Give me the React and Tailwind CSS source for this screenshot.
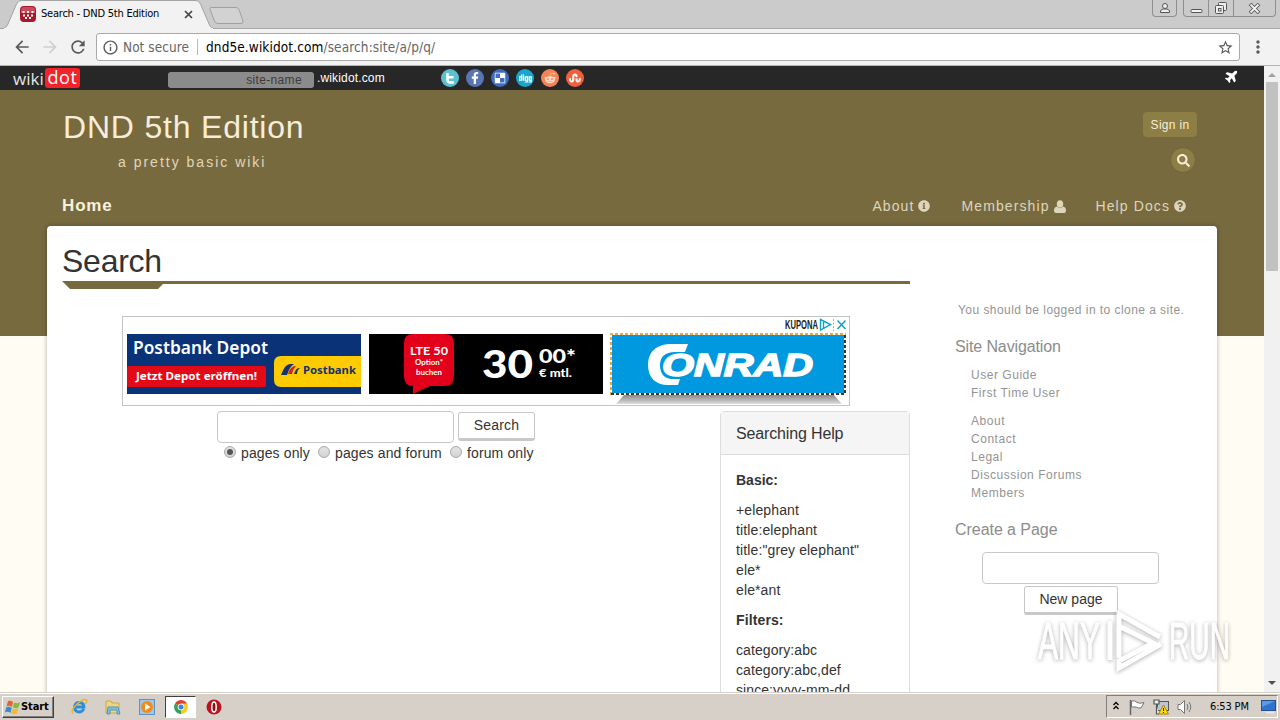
import {
  FaFacebookF,
  FaDelicious,
  FaDigg,
  FaRedditAlien,
  FaStumbleupon,
  FaInfoCircle,
  FaQuestionCircle,
  FaSearch,
  FaPlane,
} from 'react-icons/fa';
import { MdArrowBack, MdArrowForward, MdRefresh, MdInfoOutline, MdStarBorder, MdMoreVert } from 'react-icons/md';

const TabStrip = () => (
  <div className="relative flex h-[29px] shrink-0 bg-[#cbcbcb] border-b border-[#a8a8a8]">
    <svg className="absolute left-0 top-0" width="250" height="29">
      <path d="M0 29 V28.5 H3 Q6 28 7.500 25 L16.500 4 Q18 .5 21 .5 H196 Q199 .5 200.500 4 L209.500 25 Q211 28.500 214 28.500 V29 Z" fill="#f2f2f2" stroke="#a3a3a3" />
      <path d="M4 29 H213" stroke="#f2f2f2" strokeWidth="2" />
      <path d="M211 7.500 H236 Q238 7.500 239 9.500 L243 21 Q243.500 23.500 241 23.500 H218 Q215.500 23.500 214.500 21 L210 9.500 Q209.500 7.500 211 7.500 Z" fill="#d2d2d2" stroke="#a0a0a0" />
    </svg>
    <div className="relative flex h-7 w-[200px] items-center pl-5">
      <svg width="16" height="16" viewBox="0 0 16 16">
        <rect width="16" height="16" rx="4" fill="#a8182a" />
        <path d="M1 4 Q1 1 4 1 H12 Q15 1 15 4 V7 H1 Z" fill="#c94a58" />
        <g fill="#fff">
          <rect x="2.500" y="5" width="2" height="2" />
          <rect x="7" y="5" width="2" height="2" />
          <rect x="11.500" y="5" width="2" height="2" />
          <rect x="3" y="8.500" width="2" height="2" />
          <rect x="7" y="8.500" width="2" height="2" />
          <rect x="11" y="8.500" width="2" height="2" />
          <rect x="5" y="11" width="2" height="2" />
          <rect x="9" y="11" width="2" height="2" />
        </g>
      </svg>
      <span className="ml-[5px] mt-px whitespace-nowrap text-[11px] tracking-[-0.220px] text-black">Search - DND 5th Edition</span>
      <svg className="ml-auto mr-[7px]" width="9" height="9" viewBox="0 0 9 9">
        <path d="M1 1 L8 8 M8 1 L1 8" stroke="#444" strokeWidth="1.700" />
      </svg>
    </div>
    <div className="ml-auto flex h-[17px]">
      <div className="flex w-[25px] items-center justify-center rounded-b border border-t-0 border-[#8f8f8f]">
        <svg width="12" height="12" viewBox="0 0 12 12" fill="#eee" stroke="#555">
          <path d="M1.500 10.500 V8.500 L4 7 H8 L10.500 8.500 V10.500 Z" />
          <circle cx="6" cy="4" r="2.500" />
        </svg>
      </div>
      <div className="ml-[6px] mr-1 flex w-[93px] rounded-b border border-t-0 border-[#8f8f8f]">
        <div className="flex w-[25px] items-center justify-center border-r border-[#8f8f8f]">
          <svg width="13" height="15" viewBox="0 0 13 15">
            <rect x="1" y="8.500" width="11" height="3" rx="1" fill="#f4f4f4" stroke="#555" />
          </svg>
        </div>
        <div className="flex w-[25px] items-center justify-center border-r border-[#8f8f8f]">
          <svg width="14" height="14" viewBox="0 0 14 14" fill="#eee" stroke="#555">
            <rect x="4.500" y="1.500" width="8" height="8" rx="1" />
            <rect x="1.500" y="4.500" width="8" height="8" rx="1" />
            <rect x="4.500" y="7.500" width="2.500" height="2.500" />
          </svg>
        </div>
        <div className="flex flex-1 items-center justify-center">
          <svg width="13" height="11" viewBox="0 0 13 11">
            <path d="M2 1 L11 10 M11 1 L2 10" stroke="#555" strokeWidth="3.600" />
            <path d="M2.500 1.500 L10.500 9.500 M10.500 1.500 L2.500 9.500" stroke="#f2f2f2" strokeWidth="1.800" />
          </svg>
        </div>
      </div>
    </div>
  </div>
);

const Toolbar = () => (
  <div className="flex h-[37px] shrink-0 items-center border-b border-[#b4b4b4] bg-[#f2f2f2] text-[#5a5a5a]">
    <MdArrowBack size={20} className="ml-3" />
    <MdArrowForward size={20} className="ml-2 text-[#d0d0d0]" />
    <MdRefresh size={20} className="ml-2" />
    <div className="ml-2 flex h-7 w-[1144px] items-center rounded-[3px] border border-[#a9a9a9] bg-white">
      <MdInfoOutline size={17} className="ml-[5px]" />
      <span className="ml-1 w-[67px] whitespace-nowrap text-[13.500px] tracking-[0.050px] text-[#666]">Not secure</span>
      <div className="ml-[7px] h-4 w-px bg-[#bbb]" />
      <span className="ml-[8px] text-[13.500px] tracking-[0.110px] text-[#666]">
        <span className="text-black">dnd5e.wikidot.com</span>/search:site/a/p/q/
      </span>
      <MdStarBorder size={17} className="ml-auto mr-[5px]" />
    </div>
    <MdMoreVert size={20} className="ml-2" />
  </div>
);

const TwitterT = () => (
  <svg width="10" height="11" viewBox="0 0 10 11">
    <path d="M2.500 1 V7 Q2.500 9.500 5 9.500 H8 M2.500 4.200 H7.500" fill="none" stroke="#fff" strokeWidth="2.600" strokeLinecap="round" />
  </svg>
);

const socials = [
  { icon: <TwitterT />, className: 'bg-[#5bc0cf]' },
  { icon: <FaFacebookF size={12} />, className: 'bg-[#5a76b0]' },
  { icon: <FaDelicious size={12} />, className: 'bg-[#3f6cc0]' },
  { icon: <FaDigg size={13} />, className: 'bg-[#1aa5cc]' },
  { icon: <FaRedditAlien size={12} />, className: 'bg-[#f58455] text-[#ffd9c4]' },
  { icon: <FaStumbleupon size={12} />, className: 'bg-[#f0603a]' },
];

const WikidotBar = () => (
  <div className="flex h-6 shrink-0 items-center bg-[#272727] text-xs text-white">
    <div className="ml-[13px] flex w-[68px] items-center text-[17px] leading-none font-['Open_Sans',sans-serif]">
      <span className="w-[32px] text-[#e4e4e4]">wiki</span>
      <span className="flex h-5 w-[35px] items-center justify-center rounded-[3px] bg-[#f3222b] pb-0.5 text-[18px] tracking-[0.600px]">dot</span>
    </div>
    <div className="ml-[87px] mt-1 flex h-4 w-[146px] items-center justify-end rounded-[3px] bg-[#8b8b8b] pr-3 text-[12px] tracking-[0.350px] text-[#3c3c3c]">
      site-name
    </div>
    <span className="ml-[3px] w-[69px] whitespace-nowrap text-[12px] tracking-[0.150px]">.wikidot.com</span>
    <div className="ml-[55px] flex gap-[7px]">
      {socials.map((s, i) => (
        <span key={i} className={`flex h-[18px] w-[18px] items-center justify-center rounded-full ${s.className}`}>
          {s.icon}
        </span>
      ))}
    </div>
    <FaPlane size={14} className="mb-1 ml-auto mr-[25px] -rotate-45" />
  </div>
);

// Head and shoulders, drawn solid
const UserIcon = () => (
  <svg width="12" height="13" viewBox="0 0 12 13" fill="currentColor">
    <ellipse cx="6" cy="4" rx="3.200" ry="3.800" />
    <path d="M3 6.500 Q6 9.500 9 6.500 Q12 7 12 10.500 Q12 13 10 13 H2 Q0 13 0 10.500 Q0 7 3 6.500 Z" />
  </svg>
);

const SiteHeader = () => (
  <header className="flex h-[136px] shrink-0 flex-col px-[62px] text-[#f7edd9]">
    <div className="flex h-[106px] justify-between">
      <div>
        <h1 className="ml-px mt-[19px] h-9 whitespace-nowrap text-[32px] leading-9 tracking-[0.800px]">DND 5th Edition</h1>
        <p className="ml-14 mt-2 h-[18px] text-[14px] leading-[18px] tracking-[2px] text-[#e0d6bb]">a pretty basic wiki</p>
      </div>
      <div className="flex flex-col items-end pr-[5px] pt-[22px]">
        <button className="h-[25px] w-[54px] rounded-sm bg-[#8c7e45] text-[12px] tracking-[0.300px]">Sign in</button>
        <span className="mr-px mt-2.5 flex h-[26px] w-[26px] items-center justify-center rounded-full border border-[#71643a] bg-[#8c7e45]">
          <FaSearch size={13} />
        </span>
      </div>
    </div>
    <nav className="flex h-5 items-center text-[14px] tracking-[1.100px] text-[#ded5bd]">
      <span className="mr-auto text-[17px] font-bold tracking-[0.850px] text-[#f9f1dc]">Home</span>
      <span className="flex items-center gap-1">About <FaInfoCircle size={12} /></span>
      <span className="ml-[31px] flex items-center gap-1">Membership <UserIcon /></span>
      <span className="ml-[30px] mr-[16px] flex items-center gap-1">Help Docs <FaQuestionCircle size={12} /></span>
    </nav>
  </header>
);

const PostbankBanner = () => (
  <svg width="234" height="60" viewBox="0 0 234 60" fontFamily="Noto Sans" fontWeight="700" fill="#fff">
    <rect width="234" height="60" fill="#0a3377" />
    <text x="6" y="20" fontSize="18" fontWeight="600" textLength="135" lengthAdjust="spacingAndGlyphs">Postbank Depot</text>
    <rect y="32" width="139" height="21" rx="2" fill="#e30a18" />
    <text x="9" y="46" fontSize="11" textLength="121" lengthAdjust="spacingAndGlyphs">Jetzt Depot eröffnen!</text>
    <path d="M234 22 H154 Q147 22 147 29 V46 Q147 53 154 53 H234 Z" fill="#fecb00" />
    <path d="M154 41 Q158 30 163 30 H167 Q163 32 160 41 Z" fill="#12336f" />
    <path d="M161 40 Q164 31 169 32 Q166 35 165 40 Z" fill="#d8202c" />
    <path d="M167 40 Q169 33 173 34 Q170 36 170 40 Z" fill="#12336f" />
    <text x="176" y="40" fontSize="11" fill="#12336f" textLength="53" lengthAdjust="spacingAndGlyphs">Postbank</text>
  </svg>
);

const LteBanner = () => (
  <svg width="234" height="60" viewBox="0 0 234 60" fontFamily="Lato" fontWeight="900" fill="#fff">
    <rect width="234" height="60" fill="#000" />
    <path d="M44 0 H76 Q85 0 85 9 V42 Q85 52 76 52 H61 L44 60 V52 Q35 52 35 42 V9 Q35 0 44 0 Z" fill="#e2001a" />
    <text x="41" y="21" fontSize="12" fontWeight="700" textLength="38" lengthAdjust="spacingAndGlyphs">LTE 50</text>
    <text x="46" y="31" fontSize="8" fontWeight="700" textLength="28" lengthAdjust="spacingAndGlyphs">Option*</text>
    <text x="47" y="40.500" fontSize="8" fontWeight="700" textLength="26" lengthAdjust="spacingAndGlyphs">buchen</text>
    <text x="113" y="44" fontSize="37" textLength="51" lengthAdjust="spacingAndGlyphs">30</text>
    <text x="170" y="29" fontSize="19" textLength="37" lengthAdjust="spacingAndGlyphs">00*</text>
    <text x="170" y="43" fontSize="12" textLength="33" lengthAdjust="spacingAndGlyphs">€ mtl.</text>
  </svg>
);

const ConradBanner = () => (
  <svg className="overflow-visible" width="236" height="62" viewBox="0 0 236 62" fontFamily="Liberation Sans" fontWeight="700" fontStyle="italic" fill="#fff">
    <defs>
      <linearGradient id="drop" x1="0" x2="0" y1="0" y2="1">
        <stop offset="0" stopColor="#888" />
        <stop offset="1" stopColor="#ddd" />
      </linearGradient>
    </defs>
    <path d="M14 62 H224 L232 71 H6 Z" fill="url(#drop)" />
    <rect width="236" height="62" fill="#0098df" />
    <path d="M1 62 V1 H236" fill="none" stroke="#fff" strokeWidth="2" />
    <path d="M1 61 H235 V1" fill="none" stroke="#fff" strokeWidth="2" />
    <path d="M1 62 V1 H236" fill="none" stroke="#f0a63a" strokeWidth="2" strokeDasharray="3 2" />
    <path d="M1 61 H235 V1" fill="none" stroke="#3a3528" strokeWidth="2" strokeDasharray="3 2" />
    <path d="M78 11 H62 C46 11 38 19 38 32 C38 45 46 52 58 52 H68 L70 46 H62 C55 46 50 41 50 32 C50 24 55 19 65 19 H75 Z" />
    <g stroke="#fff" strokeWidth="1.500">
      <text x="52" y="43" fontSize="31" textLength="151" lengthAdjust="spacingAndGlyphs">ONRAD</text>
    </g>
  </svg>
);

const AdBox = () => (
  <div className="ml-[60px] mt-[27px] h-[90px] w-[728px] border border-[#c4c4c4]">
    <div className="flex h-4 items-center justify-end">
      <svg width="64" height="14" viewBox="0 0 64 14">
        <text x="0" y="11" fontFamily="Liberation Sans Narrow, Liberation Sans" fontWeight="700" fontSize="12" textLength="33" lengthAdjust="spacingAndGlyphs" fill="#222">KUPONA</text>
        <path d="M35.500 1.500 L45.500 6.500 L35.500 12 Z M38.500 4 V10" fill="none" stroke="#12a3c4" strokeWidth="1.400" />
        <path d="M48.500 1 V13" stroke="#f0a63a" strokeDasharray="2 1.500" />
        <path d="M52.500 2.500 L60.500 11 M60.500 2.500 L52.500 11" stroke="#12a3c4" strokeWidth="1.500" />
      </svg>
    </div>
    <div className="flex items-start pl-1">
      <div className="mt-px"><PostbankBanner /></div>
      <div className="ml-2 mt-px"><LteBanner /></div>
      <div className="ml-[7px]"><ConradBanner /></div>
    </div>
  </div>
);

const Radio = ({ checked, children, className }) => (
  <label className={`flex items-center ${className}`}>
    <span className="-mt-0.5 mr-[5px] flex h-3 w-3 items-center justify-center rounded-full border border-[#a8a8a8] bg-linear-to-b from-[#e4e4e4] to-[#d4d4d4]">
      {checked && <span className="h-1.5 w-1.5 rounded-full bg-[#555]" />}
    </span>
    {children}
  </label>
);

const SearchForm = () => (
  <form className="ml-[155px] w-[330px] text-[14px] text-[#333]">
    <div className="flex items-start">
      <div className="h-8 w-[237px] rounded border border-[#c8c8c8] bg-white" />
      <button type="button" className="ml-1 mt-px h-[29px] w-[77px] rounded-[3px] border border-b-[3px] border-[#c8c8c8] bg-white tracking-[0.200px]">
        Search
      </button>
    </div>
    <div className="ml-[7px] flex h-5 items-center whitespace-nowrap tracking-[0.120px]">
      <Radio checked className="w-[94px]">pages only</Radio>
      <Radio className="w-[132px]">pages and forum</Radio>
      <Radio className="w-[90px]">forum only</Radio>
    </div>
  </form>
);

const HelpPanel = () => (
  <div className="ml-auto h-[400px] w-[190px] rounded border border-[#ddd] text-[14px] leading-5 text-[#333]">
    <h3 className="h-[43px] border-b border-[#ddd] bg-[#f5f5f5] pl-[15px] text-[16px] leading-[43px] tracking-[-0.150px]">Searching Help</h3>
    <div className="whitespace-nowrap pl-[15px] pt-[15px]">
      <p className="mb-2.5 font-bold">Basic:</p>
      <p className="mb-2.5 tracking-[0.120px]">
        +elephant<br />
        title:elephant<br />
        title:"grey elephant"<br />
        ele*<br />
        ele*ant
      </p>
      <p className="mb-2.5 font-bold tracking-[0.120px]">Filters:</p>
      <p className="tracking-[0.080px]">
        category:abc<br />
        category:abc,def<br />
        since:yyyy-mm-dd
      </p>
    </div>
  </div>
);

const Sidebar = () => (
  <aside className="ml-[45px] w-[232px] text-[12px] leading-[18px] tracking-[0.530px] text-[#949494]">
    <p className="ml-[3px] mt-[75px] whitespace-nowrap tracking-[0.450px]">You should be logged in to clone a site.</p>
    <h3 className="mt-[18px] text-[16px] leading-5 tracking-[-0.120px] text-[#8c8c8c]">Site Navigation</h3>
    <ul className="ml-4 mt-[9px]">
      <li>User Guide</li>
      <li>First Time User</li>
    </ul>
    <ul className="ml-4 mt-2.5">
      <li>About</li>
      <li>Contact</li>
      <li>Legal</li>
      <li>Discussion Forums</li>
      <li>Members</li>
    </ul>
    <h3 className="mt-[18px] text-[16px] leading-5 tracking-[-0.050px] text-[#8c8c8c]">Create a Page</h3>
    <div className="mt-3 flex flex-col items-center">
      <div className="mr-0.5 h-8 w-[177px] rounded border border-[#c8c8c8]" />
      <button className="mt-0.5 h-[29px] w-[94px] rounded-[3px] border border-b-[3px] border-[#c8c8c8] bg-white pb-px text-[14px] tracking-normal text-[#333]">
        New page
      </button>
    </div>
  </aside>
);

const Scrollbar = () => (
  <div className="flex w-4 flex-col items-center bg-[#f1f1f1]">
    <svg width="16" height="16"><path d="M4 11 L8 7 L12 11 Z" fill="#a0a0a0" /></svg>
    <div className="h-[189px] w-3 bg-[#c1c1c1]" />
    <svg className="mt-auto" width="16" height="17"><path d="M4 6 H12 L8 10 Z" fill="#505050" /></svg>
  </div>
);

const Watermark = () => (
  <svg className="absolute left-[1034px] top-[604px] drop-shadow-[0_1px_2px_rgba(0,0,0,0.4)]" width="204" height="76" viewBox="0 0 204 76" fill="#fff" stroke="#fff" opacity=".8" fontFamily="Liberation Sans Narrow, Liberation Sans" fontSize="51">
    <text x="4" y="55" textLength="62" lengthAdjust="spacingAndGlyphs">ANY</text>
    <text x="135" y="55" textLength="61" lengthAdjust="spacingAndGlyphs">RUN</text>
    <path d="M76 56 V17 M85 54 V10 L126 33 M85 22 L119 39 L85 57 V64 L127 40" fill="none" strokeWidth="5" />
  </svg>
);

const Taskbar = () => (
  <div className="flex h-7 shrink-0 items-center border-t border-[#d4d0c8] bg-[#d6d0c8] text-[11px] text-black shadow-[inset_0_1px_0_#fff]">
    <div className="ml-0.5 flex h-[22px] w-[52px] items-center border border-b-[#404040] border-l-white border-r-[#404040] border-t-white pl-0.5 shadow-[inset_-1px_-1px_0_#808080]">
      <svg width="16" height="16" viewBox="0 0 16 16">
        <path d="M3 2 Q6 1 8 3 L7 8 Q4 6 1.500 7.500 Z" fill="#e8622c" />
        <path d="M9 3.500 Q12 5 15 3.500 L13.500 8.500 Q11 10 8 8.500 Z" fill="#86b93a" />
        <path d="M1.200 8.500 Q4 7 6.700 9 L5.500 14 Q3 12 0 13.500 Z" fill="#3d87cf" />
        <path d="M7.700 9.500 Q10 11 13.200 9.500 L12 14.500 Q9 16 6.500 14.500 Z" fill="#f5b92d" />
      </svg>
      <span className="mt-0.5 font-bold tracking-[-0.100px]">Start</span>
    </div>
    <svg className="ml-[17px]" width="17" height="17" viewBox="0 0 17 17" fill="none">
      <path d="M13 11 Q11 14 8 14 Q3.500 13.500 3.500 9 Q4 4.500 8.500 4.500 Q13 5 13 9 H5" stroke="#2a8fd8" strokeWidth="2.800" />
      <path d="M2 15.500 Q-1 13 6 6 Q13 0 15.500 2 Q16.500 3.500 14.500 6" stroke="#e5b52c" strokeWidth="1.400" />
    </svg>
    <svg className="ml-[17px]" width="16" height="16" viewBox="0 0 16 16">
      <path d="M1 2 H6 L7 4 H14 V14 H1 Z" fill="#efd67c" stroke="#c9a94a" />
      <path d="M3 8 H13 L15 15 H12 V11 H5 V15 H2 Z" fill="#7cc0e8" stroke="#4a96c8" />
    </svg>
    <svg className="ml-[18px]" width="16" height="16" viewBox="0 0 16 16">
      <rect x=".5" y=".5" width="15" height="15" fill="#9dc8ee" stroke="#5a93c8" />
      <circle cx="8" cy="8" r="6" fill="#f18a1c" />
      <path d="M6 4.500 L11.500 8 L6 11.500 Z" fill="#fff" />
    </svg>
    <div className="ml-2.5 flex h-[22px] w-[31px] items-center justify-center border border-b-white border-l-[#404040] border-r-white border-t-[#404040] bg-white">
      <svg width="14" height="14" viewBox="0 0 14 14">
        <path d="M7 7 V0 L13 3.500 A7 7 0 0 1 7 14 Z" fill="#f7c92c" />
        <path d="M7 7 L7 14 A7 7 0 0 1 1 3.500 Z" fill="#35a452" />
        <path d="M1 3.500 A7 7 0 0 1 13 3.500 H7 L7 7 Z" fill="#e0402f" />
        <circle cx="7" cy="7" r="3.300" fill="#fff" />
        <circle cx="7" cy="7" r="2.500" fill="#3f80e8" />
      </svg>
    </div>
    <svg className="ml-2.5" width="16" height="16" viewBox="0 0 16 16">
      <circle cx="8" cy="8" r="7.500" fill="#b81420" />
      <ellipse cx="8" cy="8" rx="2.200" ry="5" fill="#8c0f18" stroke="#fff" strokeWidth="1.500" />
    </svg>
    <div className="ml-auto mr-0.5 flex h-[23px] w-[172px] items-center border border-b-white border-l-[#808080] border-r-white border-t-[#808080]">
      <svg className="mb-0.5 ml-[5px]" width="8" height="10" viewBox="0 0 8 10" fill="none" stroke="#000" strokeWidth="1.300">
        <path d="M1.500 4 L4 1.500 L6.500 4 M1.500 8 L4 5.500 L6.500 8" />
      </svg>
      <svg className="ml-[9px]" width="16" height="16" viewBox="0 0 16 16">
        <path d="M1.500 1 V16" stroke="#666" strokeWidth="1.500" />
        <path d="M2.500 2 Q6 1 8 3.500 Q11 5 15 3.500 L12 9 Q9 9.500 7 8 H2.500 Z" fill="#fff" stroke="#777" />
      </svg>
      <svg className="ml-2" width="16" height="16" viewBox="0 0 16 16">
        <rect x="4.500" y="2.500" width="11" height="9" fill="#bcc6d6" stroke="#555" />
        <path d="M1 1 H6 V5 H1 Z M3.500 5 V15 H6" fill="#eee" stroke="#555" strokeWidth="1.200" />
        <path d="M10.500 6 L15.500 15 H5.500 Z" fill="#ffd90f" stroke="#a88500" />
        <path d="M10.500 9 V12 M10.500 13 V14" stroke="#222" />
      </svg>
      <svg className="ml-2" width="17" height="16" viewBox="0 0 17 16" fill="none" stroke="#777">
        <path d="M1 5.500 H3.500 L7.500 1.500 V14.500 L3.500 10.500 H1 Z" fill="#fff" />
        <path d="M10 5 Q12 8 10 11 M12 3 Q15.500 8 12 13" />
      </svg>
      <span className="ml-4 mt-0.5 w-10 whitespace-nowrap tracking-[-0.150px]">6:53 PM</span>
      <svg className="ml-[11px]" width="16" height="15" viewBox="0 0 16 15">
        <rect x=".5" y="1.500" width="14" height="10" fill="#2f73cc" stroke="#23518f" />
        <path d="M1 2 H14 L1 8 Z" fill="#5c9ae4" />
        <path d="M5 13.500 H13" stroke="#e8e8e8" strokeWidth="2" />
      </svg>
    </div>
  </div>
);

export default function App() {
  return (
    <div className="relative flex h-[720px] w-[1280px] flex-col overflow-hidden font-['DejaVu_Sans_Condensed','DejaVu_Sans',sans-serif]">
      <TabStrip />
      <Toolbar />
      <div className="flex h-[626px] shrink-0 overflow-hidden font-['Liberation_Sans',sans-serif]">
        <div className="flex w-[1264px] flex-col bg-[linear-gradient(#786a3f_270px,#fffcf4_270px)]">
          <WikidotBar />
          <SiteHeader />
          <main className="ml-[47px] flex h-[480px] w-[1170px] shrink-0 items-start rounded-t bg-white pl-[15px] shadow-[0_0_5px_rgba(0,0,0,0.3)]">
            <section className="w-[848px]">
              <h1 className="h-[55px] pt-[17px] text-[32px] leading-9 tracking-[-0.250px] text-[#333]">Search</h1>
              <div className="h-[3px] bg-[#786a3f] [clip-path:polygon(0_0,100%_0,100%_100%,3px_100%)]" />
              <div className="h-[5px] w-[101px] bg-[#786a3f] [clip-path:polygon(3px_0,100%_0,96px_100%,8px_100%)]" />
              <AdBox />
              <div className="mt-[5px] flex items-start">
                <SearchForm />
                <HelpPanel />
              </div>
            </section>
            <Sidebar />
          </main>
        </div>
        <Scrollbar />
      </div>
      <Taskbar />
      <Watermark />
    </div>
  );
}
